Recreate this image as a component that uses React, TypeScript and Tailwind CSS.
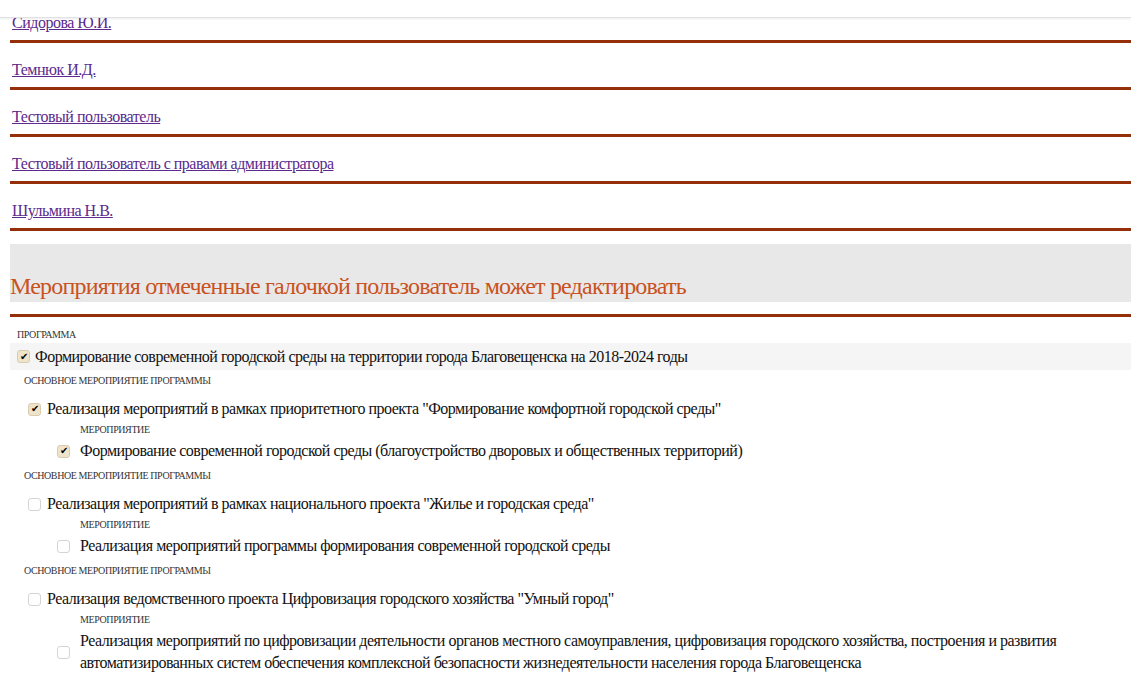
import React from "react";

const users = [
  "Сидорова Ю.И.",
  "Темнюк И.Д.",
  "Тестовый пользователь",
  "Тестовый пользователь с правами администратора",
  "Шульмина Н.В.",
];

type Sub = { title: string[]; checked: boolean };
type Main = { title: string; checked: boolean; subs: Sub[] };

const mains: Main[] = [
  {
    title: 'Реализация мероприятий в рамках приоритетного проекта "Формирование комфортной городской среды"',
    checked: true,
    subs: [
      {
        title: ["Формирование современной городской среды (благоустройство дворовых и общественных территорий)"],
        checked: true,
      },
    ],
  },
  {
    title: 'Реализация мероприятий в рамках национального проекта "Жилье и городская среда"',
    checked: false,
    subs: [
      {
        title: ["Реализация мероприятий программы формирования современной городской среды"],
        checked: false,
      },
    ],
  },
  {
    title: 'Реализация ведомственного проекта Цифровизация городского хозяйства "Умный город"',
    checked: false,
    subs: [
      {
        title: [
          "Реализация мероприятий по цифровизации деятельности органов местного самоуправления, цифровизация городского хозяйства, построения и развития",
          "автоматизированных систем обеспечения комплексной безопасности жизнедеятельности населения города Благовещенска",
        ],
        checked: false,
      },
    ],
  },
];

function Box({ checked }: { checked: boolean }) {
  return (
    <span
      className={`inline-flex h-[13px] w-[13px] shrink-0 items-center justify-center rounded-[3px] border text-[10px] leading-none ${
        checked ? "border-[#d8ccb0] bg-[#efe4c9] text-black" : "border-[#d4d4d4] bg-white"
      }`}
    >
      {checked ? "✔" : ""}
    </span>
  );
}

function Caption({ children, indent }: { children: React.ReactNode; indent: string }) {
  return (
    <div className={`h-[12px] text-[10px] leading-[12px] tracking-[-0.4px] text-[#333] uppercase ${indent}`}>
      {children}
    </div>
  );
}

export default function App() {
  return (
    <div className="relative min-h-screen overflow-hidden bg-white font-['Liberation_Serif',serif] text-[#111]">
      {/* fixed top bar */}
      <div className="absolute inset-x-0 top-0 z-10 h-[18px] border-b border-[#e2e2e2] bg-white shadow-[0_1px_2px_rgba(0,0,0,0.08)]" />

      <div className="mt-[-4px] pl-[10px]">
        {users.map((u) => (
          <div key={u} className="h-[47px] border-b-[3px] border-[#952f0a] pl-[2px] pt-[15px]">
            <a href="#" className="text-[16px] leading-[18px] tracking-[-0.5px] text-[#5b2a8c] underline">
              {u}
            </a>
          </div>
        ))}

        <div className="mt-[13px] h-[58px] bg-[#e8e8e8] pt-[27px]">
          <h2 className="text-[24px] leading-[30px] tracking-[-0.8px] text-[#c9521f]">
            Мероприятия отмеченные галочкой пользователь может редактировать
          </h2>
        </div>
        <div className="mt-[12px] h-[3px] bg-[#952f0a]" />

        <div className="mt-[12px] text-[16px] tracking-[-0.5px]">
          <Caption indent="pl-[7px]">Программа</Caption>
          <div className="mt-[2px] mb-[5px] flex h-[27px] items-center gap-[5px] bg-[#f5f5f5] pl-[7px]">
            <Box checked />
            <span>Формирование современной городской среды на территории города Благовещенска на 2018-2024 годы</span>
          </div>

          {mains.map((m) => (
            <div key={m.title}>
              <Caption indent="pl-[14px]">Основное мероприятие программы</Caption>
              <div className="flex items-center gap-[6px] pb-[4px] pl-[18px] pt-[11px] leading-[22px]">
                <Box checked={m.checked} />
                <span>{m.title}</span>
              </div>
              {m.subs.map((s) => (
                <div key={s.title[0]}>
                  <Caption indent="pl-[70px]">Мероприятие</Caption>
                  <div className="flex items-center gap-[10px] pb-[8px] pl-[47px] pt-[4px] leading-[22px]">
                    <Box checked={s.checked} />
                    <div>
                      {s.title.map((t) => (
                        <div key={t}>{t}</div>
                      ))}
                    </div>
                  </div>
                </div>
              ))}
            </div>
          ))}
        </div>
      </div>
    </div>
  );
}
